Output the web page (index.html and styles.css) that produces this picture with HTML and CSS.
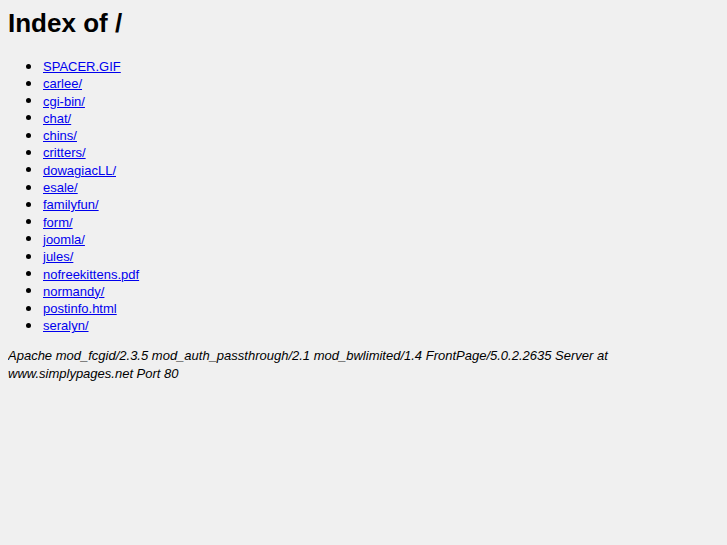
FILE: index.html
```html
<!DOCTYPE html>
<html>
<head>
<meta charset="utf-8">
<title>Index of /</title>
<link rel="stylesheet" href="styles.css">
</head>
<body>
<h1 class="title">Index of /</h1>
<ul class="listing">
<li><a href="#">SPACER.GIF</a></li>
<li><a href="#">carlee/</a></li>
<li><a href="#">cgi-bin/</a></li>
<li><a href="#">chat/</a></li>
<li><a href="#">chins/</a></li>
<li><a href="#">critters/</a></li>
<li><a href="#">dowagiacLL/</a></li>
<li><a href="#">esale/</a></li>
<li><a href="#">familyfun/</a></li>
<li><a href="#">form/</a></li>
<li><a href="#">joomla/</a></li>
<li><a href="#">jules/</a></li>
<li><a href="#">nofreekittens.pdf</a></li>
<li><a href="#">normandy/</a></li>
<li><a href="#">postinfo.html</a></li>
<li><a href="#">seralyn/</a></li>
</ul>
<address class="footer">Apache mod_fcgid/2.3.5 mod_auth_passthrough/2.1 mod_bwlimited/1.4 FrontPage/5.0.2.2635 Server at www.simplypages.net Port 80</address>
</body>
</html>
```
FILE: styles.css
```css
html {
  background: #f0f0f0;
}
body {
  margin: 8px;
  font-family: "Liberation Sans", Arial, sans-serif;
  font-size: 13px;
  line-height: 17.3px;
  color: #000;
}
.title {
  font-size: 26px;
  line-height: 30px;
  margin: 0 0 20px;
  font-weight: bold;
}
.listing {
  margin: 0 0 12px;
  padding-left: 35px;
  list-style: none;
}
.listing li::before {
  content: "";
  display: inline-block;
  width: 5px;
  height: 5px;
  border-radius: 50%;
  background: #000;
  margin-left: -17px;
  margin-right: 12px;
  vertical-align: 2.5px;
}
.listing a {
  color: #0000ee;
}
.footer {
  font-style: italic;
  line-height: 18px;
}
```
